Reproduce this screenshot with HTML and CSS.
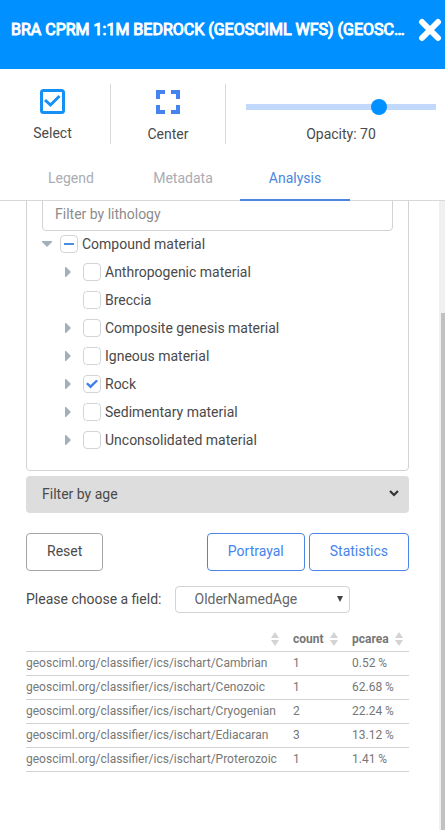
FILE: index.html
```html
<!DOCTYPE html>
<html lang="en">
<head>
<meta charset="utf-8">
<meta name="viewport" content="width=device-width, initial-scale=1">
<title>Layer panel</title>
<link rel="stylesheet" href="styles.css">
</head>
<body>
<svg class="defs" aria-hidden="true">
  <symbol id="caret" viewBox="0 0 6 10"><path d="M0 0h1l5 5-5 5H0z" fill="#a3b0b9"/></symbol>
  <symbol id="sort" viewBox="0 0 8 14"><path d="M4 0l4 6H0zM0 8h8l-4 6z" fill="#d3d3d3"/></symbol>
</svg>
<header class="header">
  <h1 class="title">BRA CPRM 1:1M BEDROCK (GEOSCIML WFS) (GEOSC...</h1>
  <button class="close" type="button" aria-label="Close">
    <svg width="24" height="24" viewBox="0 0 24 24"><path d="M4 4l16 16M20 4L4 20" stroke="#fff" stroke-width="6" stroke-linecap="round"/></svg>
  </button>
</header>
<div class="toolbar">
  <button class="tool select-tool" type="button">
    <svg width="25" height="25" viewBox="0 0 25 25" fill="none" stroke="#1590f5"><rect x="1.5" y="1.5" width="22" height="22" rx="2" stroke-width="3"/><path d="M5 11l5.500 5 9-9" stroke-width="3"/></svg>
    <span>Select</span>
  </button>
  <button class="tool center-tool" type="button">
    <svg width="24" height="24" viewBox="0 0 24 24" fill="none" stroke="#4583ee" stroke-width="4"><path d="M2 9V2h7M15 2h7v7M22 15v7h-7M9 22H2v-7"/></svg>
    <span>Center</span>
  </button>
  <div class="opacity">
    <input id="opacity" class="slider" type="range" min="0" max="100" value="70">
    <label for="opacity">Opacity: 70</label>
  </div>
</div>
<nav class="tabs">
  <a class="tab" href="#legend">Legend</a>
  <a class="tab" href="#metadata">Metadata</a>
  <a class="tab active" href="#analysis">Analysis</a>
</nav>
<main class="panel">
  <div class="content">
    <section class="card">
      <input class="filter" type="text" placeholder="Filter by lithology" aria-label="Filter by lithology">
      <ul class="tree">
        <li>
          <div class="node"><button class="toggle open" type="button" aria-label="Collapse"><svg width="6" height="10"><use href="#caret"/></svg></button><input class="box partial" type="checkbox" id="n0"><label for="n0">Compound material</label></div>
          <ul class="tree nested">
            <li class="node"><button class="toggle" type="button" aria-label="Expand"><svg width="6" height="10"><use href="#caret"/></svg></button><input class="box" type="checkbox" id="n1"><label for="n1">Anthropogenic material</label></li>
            <li class="node"><span class="toggle"></span><input class="box" type="checkbox" id="n2"><label for="n2">Breccia</label></li>
            <li class="node"><button class="toggle" type="button" aria-label="Expand"><svg width="6" height="10"><use href="#caret"/></svg></button><input class="box" type="checkbox" id="n3"><label for="n3">Composite genesis material</label></li>
            <li class="node"><button class="toggle" type="button" aria-label="Expand"><svg width="6" height="10"><use href="#caret"/></svg></button><input class="box" type="checkbox" id="n4"><label for="n4">Igneous material</label></li>
            <li class="node"><button class="toggle" type="button" aria-label="Expand"><svg width="6" height="10"><use href="#caret"/></svg></button><input class="box" type="checkbox" id="n5" checked><label for="n5">Rock</label></li>
            <li class="node"><button class="toggle" type="button" aria-label="Expand"><svg width="6" height="10"><use href="#caret"/></svg></button><input class="box" type="checkbox" id="n6"><label for="n6">Sedimentary material</label></li>
            <li class="node"><button class="toggle" type="button" aria-label="Expand"><svg width="6" height="10"><use href="#caret"/></svg></button><input class="box" type="checkbox" id="n7"><label for="n7">Unconsolidated material</label></li>
          </ul>
        </li>
      </ul>
    </section>
    <button class="accordion" type="button"><span>Filter by age</span>
      <svg width="10" height="12" viewBox="0 0 10 12" fill="none"><path d="M1 3l4 4 4-4" stroke="#333" stroke-width="2.200"/></svg>
    </button>
    <div class="actions">
      <button class="btn reset" type="button">Reset</button>
      <button class="btn primary" type="button">Portrayal</button>
      <button class="btn primary" type="button">Statistics</button>
    </div>
    <div class="field">
      <label for="field">Please choose a field:</label>
      <div class="picker">
        <select id="field"><option>OlderNamedAge</option></select>
        <svg class="arrow" width="6" height="6" viewBox="0 0 6 6"><path d="M0 0h6L3 6z" fill="#444"/></svg>
      </div>
    </div>
    <table class="stats">
      <colgroup><col><col class="col-count"><col class="col-area"></colgroup>
      <thead>
        <tr>
          <th scope="col"><div class="head"><span></span><svg width="8" height="14"><use href="#sort"/></svg></div></th>
          <th scope="col"><div class="head"><span>count</span><svg width="8" height="14"><use href="#sort"/></svg></div></th>
          <th scope="col"><div class="head last"><span>pcarea</span><svg width="8" height="14"><use href="#sort"/></svg></div></th>
        </tr>
      </thead>
      <tbody>
        <tr><td>geosciml.org/classifier/ics/ischart/Cambrian</td><td>1</td><td>0.52 %</td></tr>
        <tr><td>geosciml.org/classifier/ics/ischart/Cenozoic</td><td>1</td><td>62.68 %</td></tr>
        <tr><td>geosciml.org/classifier/ics/ischart/Cryogenian</td><td>2</td><td>22.24 %</td></tr>
        <tr><td>geosciml.org/classifier/ics/ischart/Ediacaran</td><td>3</td><td>13.12 %</td></tr>
        <tr><td>geosciml.org/classifier/ics/ischart/Proterozoic</td><td>1</td><td>1.41 %</td></tr>
      </tbody>
    </table>
  </div>
  <div class="scrollbar"><div class="thumb"></div></div>
</main>
</body>
</html>
```
FILE: styles.css
```css
* { box-sizing: border-box; }
body {
  margin: 0;
  min-height: 100vh;
  display: flex;
  flex-direction: column;
  background: #fff;
  color: #4a4a4a;
  font: 14px/20px Roboto, sans-serif;
}
button, input, select { font: inherit; color: inherit; }
button { background: none; border: 0; padding: 0; cursor: pointer; }
svg { display: block; flex: none; }
.defs { position: absolute; width: 0; height: 0; }

.header {
  display: flex;
  align-items: flex-start;
  gap: 12px;
  height: 69px;
  padding: 18px 3px 0 11px;
  background: #0090ff;
  color: #fff;
}
.title {
  flex: 1;
  min-width: 0;
  margin: 0;
  font-size: 16px;
  line-height: 24px;
  font-weight: 400;
  -webkit-text-stroke: 1px #fff;
  white-space: nowrap;
  overflow: hidden;
  text-overflow: ellipsis;
}

.toolbar { display: flex; padding-top: 15px; }
.tool {
  display: flex;
  flex-direction: column;
  align-items: center;
  height: 60px;
  border-right: 1px solid #d8d8d8;
}
.select-tool { width: 111px; padding: 5px 5px 0 0; gap: 9px; }
.center-tool { width: 115px; padding-top: 6px; gap: 10px; }
.opacity {
  flex: 1;
  display: flex;
  flex-direction: column;
  align-items: center;
  gap: 9px;
  padding: 15px 9px 0 20px;
}
.slider {
  appearance: none;
  width: calc(100% + 16px);
  height: 16px;
  margin: 0 -8px;
  background: none;
}
.slider::-webkit-slider-runnable-track {
  height: 16px;
  background: linear-gradient(#c2d9fb, #c2d9fb) center / calc(100% - 16px) 6px no-repeat;
}
.slider::-webkit-slider-thumb {
  appearance: none;
  width: 16px;
  height: 16px;
  border-radius: 50%;
  background: #0090ff;
}

.tabs {
  display: flex;
  gap: 2px;
  height: 57px;
  padding: 0 16px;
  align-items: flex-end;
  border-bottom: 1px solid #d8d8d8;
}
.tab {
  width: 110px;
  height: 33px;
  margin-bottom: -1px;
  border-bottom: 2px solid transparent;
  text-align: center;
  color: #aaacb3;
  text-decoration: none;
}
.tab.active { color: #4a86e0; border-color: #4a86e0; }

.panel { flex: 1; display: flex; overflow: hidden; }
.content { flex: 1; min-width: 0; padding: 0 30px 0 26px; }
.scrollbar { width: 6px; padding: 112px 0 0 2px; display: flex; background: #f0f0f0; }
.thumb { flex: 1; background: #c1c1c1; }

.card {
  margin-top: -24px;
  padding: 15px;
  border: 1px solid #d3d3d3;
  border-radius: 4px;
}
.filter {
  display: block;
  width: 100%;
  height: 38px;
  padding: 4px 12px 0;
  border: 1px solid #d3d3d3;
  border-radius: 4px;
  background: none;
}
.filter::placeholder { color: #8c8c8c; opacity: 1; }
.tree { list-style: none; margin: 0; padding: 0; }
.nested { padding-left: 23px; }
.node { display: flex; align-items: center; height: 28px; padding-bottom: 2px; }
.toggle { width: 18px; display: flex; }
.toggle.open svg { transform: rotate(90deg); margin-left: 2px; }
.box {
  appearance: none;
  display: grid;
  place-items: center;
  width: 18px;
  height: 18px;
  margin: 0 4px 0 0;
  border: 1px solid #d3d6d9;
  border-radius: 4px;
}
.box.partial::before { content: ""; width: 10px; height: 2px; background: #4a90e2; }
.box:checked::before {
  content: "";
  width: 12px;
  height: 9px;
  background: #3f7fee;
  clip-path: polygon(0 50%, 14% 34%, 38% 62%, 87% 0, 100% 16%, 38% 100%);
}

.accordion {
  display: flex;
  justify-content: space-between;
  align-items: center;
  width: 100%;
  height: 37px;
  margin-top: 5px;
  padding: 0 10px 2px 16px;
  border-radius: 4px;
  background: #ddd;
}
.actions { display: flex; gap: 4px; margin-top: 20px; }
.btn {
  height: 38px;
  padding: 0 20px 2px;
  border: 1px solid #a5a5a5;
  border-radius: 4px;
}
.reset { margin-right: auto; }
.primary { border-color: #4a86e8; color: #4583ee; }

.field { display: flex; align-items: center; gap: 13px; margin-top: 15px; }
.field label { padding-bottom: 2px; }
.picker { position: relative; width: 175px; }
.picker select {
  appearance: none;
  display: block;
  width: 100%;
  height: 27px;
  padding: 0 19px 2px;
  border: 1px solid #d3d3d3;
  border-radius: 4px;
  background: none;
  color: #666;
}
.arrow { position: absolute; right: 7px; top: 10px; pointer-events: none; }

.stats {
  width: 100%;
  margin-top: 14px;
  table-layout: fixed;
  border-collapse: collapse;
  font-size: 12px;
  line-height: 16px;
  color: #777;
}
.col-count { width: 59px; }
.col-area { width: 57px; }
.stats th, .stats td {
  height: 24px;
  padding: 0;
  border-bottom: 1px solid #d3d3d3;
  text-align: left;
  white-space: nowrap;
}
.head { display: flex; justify-content: space-between; align-items: center; padding-right: 14px; }
.head.last { padding-right: 6px; }
```
